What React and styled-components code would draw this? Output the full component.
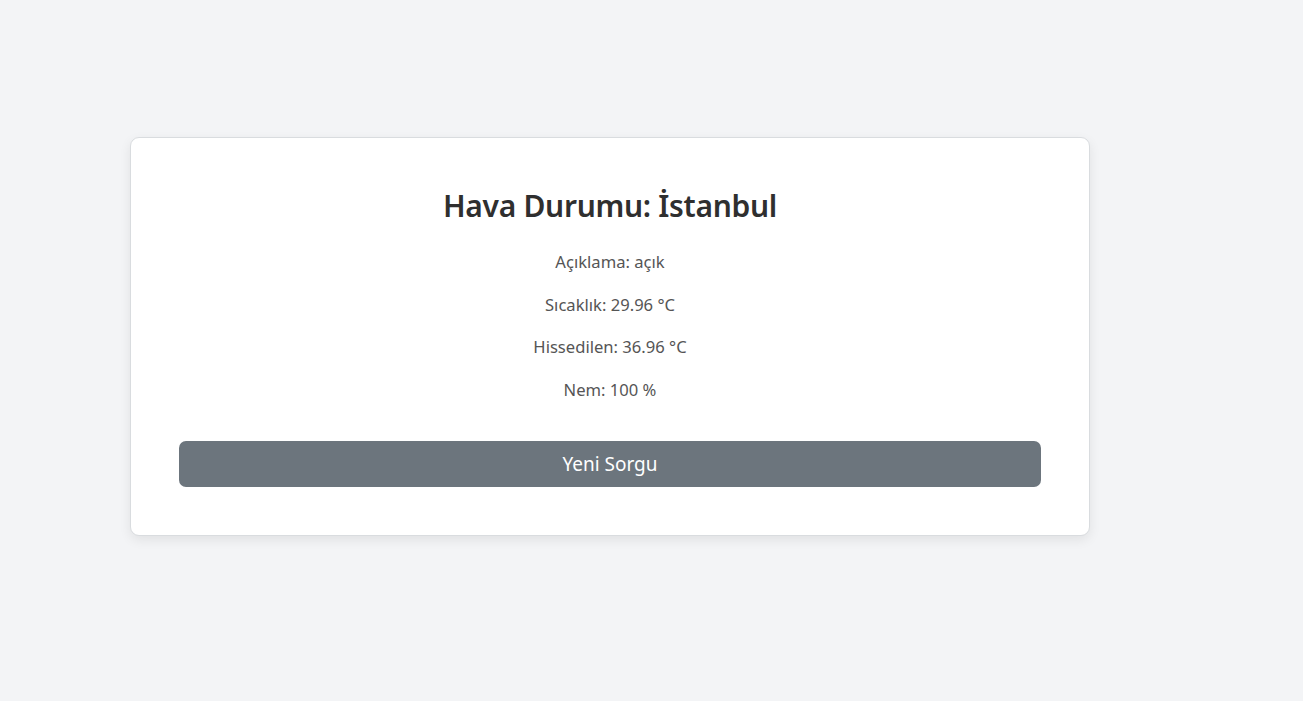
import React from "react";
import styled, { createGlobalStyle } from "styled-components";

const GlobalStyle = createGlobalStyle`
  html, body {
    margin: 0;
    padding: 0;
    background: #f3f4f6;
    font-family: "Segoe UI", "Noto Sans", "Open Sans", sans-serif;
  }
  * { box-sizing: border-box; }
`;

const Page = styled.div`
  min-height: 701px;
  padding: 137px 0 0 130px;
`;

const Card = styled.div`
  width: 960px;
  background: #ffffff;
  border: 1px solid #d9dcdf;
  border-radius: 9px;
  box-shadow: 0 4px 12px rgba(0, 0, 0, 0.08);
  padding: 49px 48px 48px;
  text-align: center;
`;

const Title = styled.h2`
  margin: 0 0 24px;
  font-size: 30px;
  line-height: 38px;
  font-weight: 600;
  letter-spacing: -0.3px;
  color: #2f2f2f;
`;

const Line = styled.p`
  margin: 0 0 17px;
  font-size: 16.6px;
  line-height: 25.5px;
  color: #555555;
`;

const Button = styled.button`
  display: block;
  width: 100%;
  margin-top: 39px;
  height: 46px;
  border: none;
  border-radius: 7px;
  background: #6c757d;
  color: #ffffff;
  font-family: inherit;
  font-size: 19px;
  line-height: 30px;
  cursor: pointer;
`;

const rows = [
  "Açıklama: açık",
  "Sıcaklık: 29.96 °C",
  "Hissedilen: 36.96 °C",
  "Nem: 100 %",
];

export default function App() {
  return (
    <>
      <GlobalStyle />
      <Page>
        <Card>
          <Title>Hava Durumu: İstanbul</Title>
          {rows.map((r) => (
            <Line key={r}>{r}</Line>
          ))}
          <Button>Yeni Sorgu</Button>
        </Card>
      </Page>
    </>
  );
}
